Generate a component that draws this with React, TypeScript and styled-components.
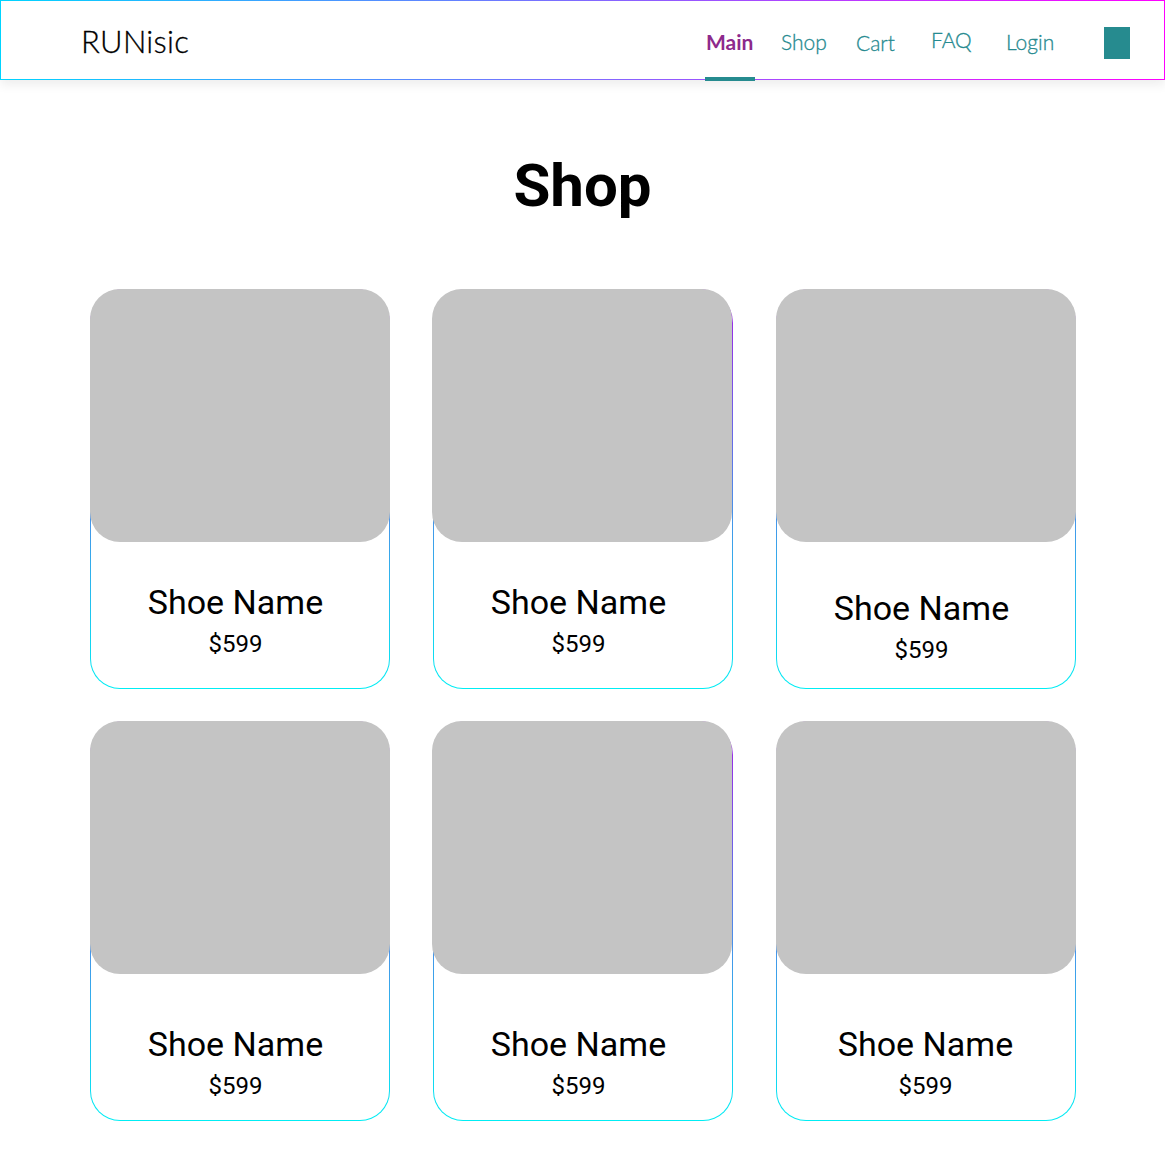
import React from "react";
import styled, { createGlobalStyle } from "styled-components";

const GlobalStyle = createGlobalStyle`
  html, body {
    margin: 0;
    padding: 0;
    background: #ffffff;
  }
  * { box-sizing: border-box; }
`;

const Page = styled.div`
  width: 100%;
  min-height: 1170px;
  background: #ffffff;
  font-family: Roboto, "Liberation Sans", sans-serif;
`;

const Header = styled.header`
  position: relative;
  height: 80px;
  display: flex;
  align-items: center;
  justify-content: space-between;
  padding: 0 9px 0 80px;
  border: 1px solid;
  border-image: linear-gradient(90deg, #00d4ff 0%, #ff00ff 100%) 1;
  box-shadow: 0 5px 10px rgba(0, 0, 0, 0.07);
  background: #ffffff;
`;

const Logo = styled.div`
  font-family: Lato, "Open Sans", sans-serif;
  font-size: 31px;
  font-weight: 300;
  color: #000000;
  letter-spacing: 0.3px;
  margin-top: 1px;
  -webkit-text-stroke: 0.3px #000000;
`;

const Nav = styled.nav`
  display: flex;
  align-items: stretch;
  height: 100%;
`;

const NavCell = styled.div<{ $center?: boolean }>`
  position: relative;
  width: 75px;
  display: flex;
  align-items: center;
  justify-content: ${(p) => (p.$center ? "center" : "flex-start")};
`;

const NavLink = styled.a<{ $active?: boolean; $dy?: number }>`
  font-family: Lato, "Open Sans", sans-serif;
  font-size: 21px;
  font-weight: ${(p) => (p.$active ? 700 : 300)};
  color: ${(p) => (p.$active ? "#8d2a8c" : "#268a90")};
  -webkit-text-stroke: ${(p) => (p.$active ? "0" : "0.3px #268a90")};
  text-decoration: none;
  padding: 0 1px;
  position: relative;
  top: ${(p) => (p.$dy ?? 0) + 1}px;
`;

const ActiveBar = styled.span`
  position: absolute;
  left: 0;
  width: 50px;
  bottom: -2px;
  height: 4px;
  background: #268b8f;
`;

const MenuBlock = styled.div`
  width: 26px;
  height: 32px;
  background: #268b8f;
  margin-top: 6px;
  margin-right: 2px;
`;

const Title = styled.h1`
  margin: 71px 0 0;
  text-align: center;
  font-family: Roboto, "Liberation Sans", sans-serif;
  font-weight: 700;
  font-size: 60px;
  line-height: 70px;
  color: #000000;
`;

const Grid = styled.div`
  display: grid;
  grid-template-columns: repeat(3, 300px);
  column-gap: 43px;
  row-gap: 32px;
  justify-content: center;
  margin: 68px 0 0;
  padding-left: 1px;
`;

const Card = styled.div`
  width: 300px;
  height: 400px;
  display: flex;
  flex-direction: column;
  border: 1px solid transparent;
  border-radius: 34px 34px 30px 30px;
  background:
    linear-gradient(#ffffff, #ffffff) padding-box,
    linear-gradient(180deg, #a21fe6 0%, #4a8fe8 55%, #00eef4 100%) border-box;
`;

const Picture = styled.div<{ $shift?: boolean }>`
  height: 253px;
  margin: ${(p) => (p.$shift ? "-1px 0 0 -2px" : "-1px -1px 0 -1px")};
  border-radius: 30px;
  background: #c4c4c4;
  flex-shrink: 0;
`;

const Body = styled.div<{ $dy: number; $dx: number }>`
  display: flex;
  flex-direction: column;
  align-items: center;
  padding: ${(p) => 40 + p.$dy}px ${(p) => 9 - p.$dx * 2}px 0 0;
`;

const Name = styled.div`
  font-family: Roboto, "Liberation Sans", sans-serif;
  font-size: 34px;
  line-height: 41px;
  font-weight: 400;
  color: #000000;
`;

const Price = styled.div`
  margin-top: 7px;
  font-family: Roboto, "Liberation Sans", sans-serif;
  font-size: 24px;
  line-height: 28px;
  color: #000000;
`;

const navItems = [
  { label: "Main", active: true, dy: 0 },
  { label: "Shop", dy: 0 },
  { label: "Cart", dy: 1.5 },
  { label: "FAQ", dy: -2 },
  { label: "Login", dy: 0 },
];

const products = [
  { shift: false, dy: 0, dx: 0 },
  { shift: true, dy: 0, dx: 0 },
  { shift: false, dy: 6, dx: 0 },
  { shift: false, dy: 10, dx: 0 },
  { shift: true, dy: 10, dx: 0 },
  { shift: false, dy: 10, dx: 4 },
];

export default function App() {
  return (
    <Page>
      <GlobalStyle />
      <Header>
        <Logo>RUNisic</Logo>
        <Nav>
          {navItems.map((n) => (
            <NavCell key={n.label}>
              <NavLink href="#" $active={n.active} $dy={n.dy}>
                {n.label}
              </NavLink>
              {n.active && <ActiveBar />}
            </NavCell>
          ))}
          <NavCell $center>
            <MenuBlock />
          </NavCell>
        </Nav>
      </Header>
      <Title>Shop</Title>
      <Grid>
        {products.map((p, i) => (
          <Card key={i}>
            <Picture $shift={p.shift} />
            <Body $dy={p.dy} $dx={p.dx}>
              <Name>Shoe Name</Name>
              <Price>$599</Price>
            </Body>
          </Card>
        ))}
      </Grid>
    </Page>
  );
}
